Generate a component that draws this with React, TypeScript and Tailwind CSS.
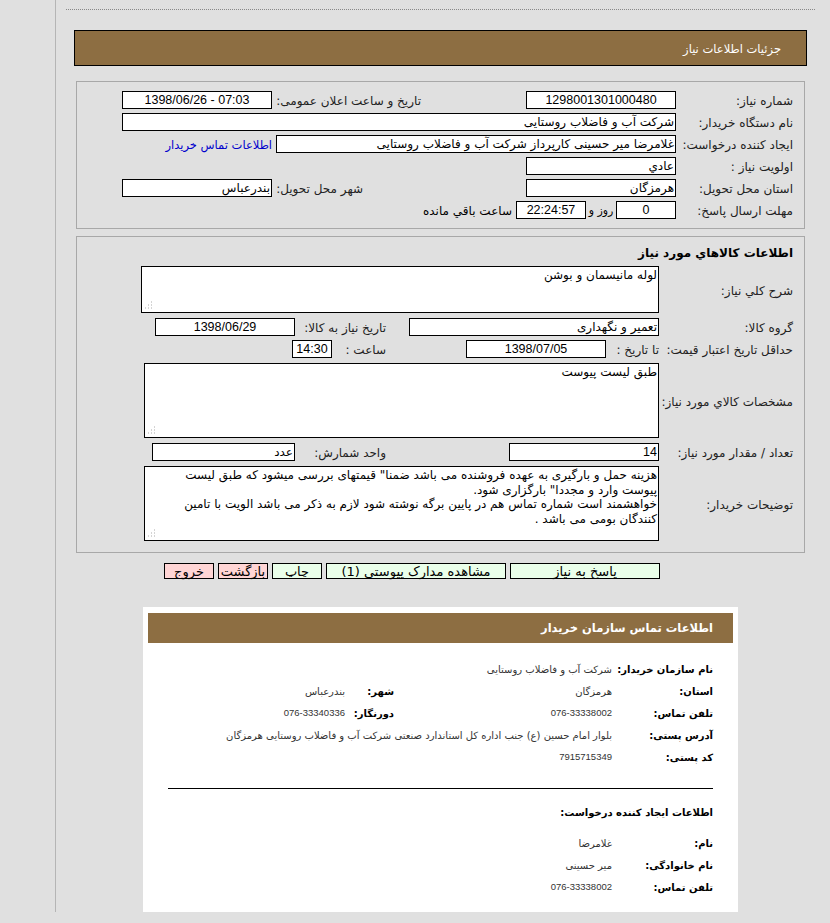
import type { ReactNode } from "react"

function Box({ w, center, num, children }: { w: string; center?: boolean; num?: boolean; children?: ReactNode }) {
  return (
    <div
      className={`${w} h-[18px] shrink-0 bg-white border border-black leading-[16px] overflow-hidden whitespace-nowrap ${center ? "text-center" : "pr-px"} ${num ? "font-['Liberation_Sans',sans-serif] text-[12.5px]" : "text-[12px]"}`}
    >
      {num ? <span dir="ltr">{children}</span> : children}
    </div>
  )
}

function Label({ w, className = "", children }: { w: string; className?: string; children: ReactNode }) {
  return <div className={`${w} shrink-0 pt-0.5 text-[12px] leading-[16px] text-[#222] whitespace-nowrap ${className}`}>{children}</div>
}

function Grip() {
  return (
    <svg className="absolute left-[3px] bottom-0.5" width="8" height="9" viewBox="0 0 8 9">
      <path d="M6 1h1M6 4h1M6 7h1M3 4h1M3 7h1M0 7h1" stroke="#aaa" strokeWidth="1" />
    </svg>
  )
}

function TextArea({ w, h, className = "", children }: { w: string; h: string; className?: string; children: ReactNode }) {
  return (
    <div className={`relative ${w} ${h} shrink-0 bg-white border border-black text-[12px] leading-[14.5px] pr-px pt-px ${className}`}>
      {children}
      <Grip />
    </div>
  )
}

function Btn({ tone, w, children }: { tone: "green" | "red"; w: string; children: ReactNode }) {
  return (
    <div className={`${w} h-4 shrink-0 border border-black text-center text-[13px] leading-[15px] whitespace-nowrap ${tone === "green" ? "bg-[#eaffea]" : "bg-[#ffd5d5]"}`}>
      {children}
    </div>
  )
}

function Key({ w = "w-[101px]", children }: { w?: string; children: ReactNode }) {
  return <div className={`${w} shrink-0 whitespace-nowrap text-[10px] font-bold text-black`}>{children}</div>
}

function Val({ w = "", num, children }: { w?: string; num?: boolean; children: ReactNode }) {
  return (
    <div className={`${w} whitespace-nowrap text-[#333] ${num ? "font-['Liberation_Sans',sans-serif] text-[9.5px]" : "text-[10px]"}`}>
      {num ? <span dir="ltr">{children}</span> : children}
    </div>
  )
}

function InfoRow({ children }: { children: ReactNode }) {
  return <div className="flex h-[22px] items-center">{children}</div>
}

export default function App() {
  return (
    <div dir="rtl" className="h-[923px] overflow-hidden bg-[#e0e0e0] font-['DejaVu_Sans',sans-serif] text-black">
      <div className="ml-[55px] h-[912px] border-l border-[#b5b5b5]">
        <div className="ml-[10px] mr-[15px] h-[10px] border-b border-dotted border-[#888]" />

        <div className="ml-[18px] mr-[23px] mt-5 h-9 border border-black bg-[#8d6e42] pr-[25px] text-[11.5px] leading-[36px] text-white">
          جزئیات اطلاعات نیاز
        </div>

        <div className="ml-[20px] mr-[25px] mt-[15px] flex h-[148px] flex-col gap-1 border border-[#a8a8a8] pr-[11px] pt-[9px]">
          <div className="flex items-center">
            <Label w="w-[117px]">شماره نیاز:</Label>
            <Box w="w-[150px]" center num>1298001301000480</Box>
            <Label w="w-[254px]" className="pr-[105px]">تاریخ و ساعت اعلان عمومی:</Label>
            <Box w="w-[150px]" center num>1398/06/26 - 07:03</Box>
          </div>
          <div className="flex items-center">
            <Label w="w-[117px]">نام دستگاه خریدار:</Label>
            <Box w="w-[554px]">شرکت آب و فاضلاب روستایی</Box>
          </div>
          <div className="flex items-center">
            <Label w="w-[117px]">ایجاد کننده درخواست:</Label>
            <Box w="w-[400px]">غلامرضا میر حسینی کارپرداز شرکت آب و فاضلاب روستایی</Box>
            <div className="mr-1 whitespace-nowrap pt-0.5 text-[11.5px] leading-[16px] text-[#0000cc]">اطلاعات تماس خریدار</div>
          </div>
          <div className="flex items-center">
            <Label w="w-[117px]">اولویت نیاز :</Label>
            <Box w="w-[150px]">عادي</Box>
          </div>
          <div className="flex items-center">
            <Label w="w-[117px]">استان محل تحویل:</Label>
            <Box w="w-[150px]">هرمزگان</Box>
            <Label w="w-[254px]" className="pr-[163px]">شهر محل تحویل:</Label>
            <Box w="w-[150px]">بندرعباس</Box>
          </div>
          <div className="flex items-center">
            <Label w="w-[117px]">مهلت ارسال پاسخ:</Label>
            <Box w="w-[60px]" center num>0</Box>
            <div className="w-[30px] shrink-0 whitespace-nowrap pt-0.5 text-center text-[11px] leading-[16px]">روز و</div>
            <Box w="w-[70px]" center num>22:24:57</Box>
            <div className="mr-1 whitespace-nowrap pt-0.5 text-[12px] leading-[16px]">ساعت باقي مانده</div>
          </div>
        </div>

        <div className="ml-[20px] mr-[25px] mt-[7px] h-[317px] border border-[#a8a8a8] pr-[11px] pt-2">
          <div className="text-[12px] font-bold leading-[16px]">اطلاعات كالاهاي مورد نياز</div>
          <div className="mt-[5px] flex items-center">
            <Label w="w-[134px]">شرح کلي نياز:</Label>
            <TextArea w="w-[518px]" h="h-[47px]">لوله مانیسمان و بوشن</TextArea>
          </div>
          <div className="mt-[5px] flex items-center">
            <Label w="w-[134px]">گروه کالا:</Label>
            <Box w="w-[250px]">تعمیر و نگهداری</Box>
            <Label w="w-[114px]" className="pr-[23px]">تاریخ نیاز به کالا:</Label>
            <Box w="w-[140px]" center num>1398/06/29</Box>
          </div>
          <div className="mt-1 flex items-center">
            <Label w="w-[134px]">حداقل تاریخ اعتبار قیمت:</Label>
            <Label w="w-[53px]">تا تاریخ :</Label>
            <Box w="w-[140px]" center num>1398/07/05</Box>
            <Label w="w-[134px]" className="pr-[80px]">ساعت :</Label>
            <Box w="w-[40px]" center num>14:30</Box>
          </div>
          <div className="mt-[5px] flex items-center">
            <Label w="w-[134px]">مشخصات کالاي مورد نياز:</Label>
            <TextArea w="w-[515px]" h="h-[75px]">طبق لیست پیوست</TextArea>
          </div>
          <div className="mt-[5px] flex items-center">
            <Label w="w-[134px]">تعداد / مقدار مورد نیاز:</Label>
            <Box w="w-[150px]" num>14</Box>
            <Label w="w-[214px]" className="pr-[123px]">واحد شمارش:</Label>
            <Box w="w-[143px]">عدد</Box>
          </div>
          <div className="mt-[5px] flex items-center">
            <Label w="w-[134px]">توضیحات خریدار:</Label>
            <TextArea w="w-[515px]" h="h-[75px]" className="pl-[18px]">
              هزینه حمل و بارگیری به عهده فروشنده می باشد ضمنا" قیمتهای بررسی میشود که طبق لیست پیوست وارد و مجددا" بارگزاری شود.
              <br />
              خواهشمند است شماره تماس هم در پایین برگه نوشته شود لازم به ذکر می باشد الویت با تامین کنندگان بومی می باشد .
            </TextArea>
          </div>
        </div>

        <div className="mr-[170px] mt-[10px] flex gap-1">
          <Btn tone="green" w="w-[150px]">پاسخ به نیاز</Btn>
          <Btn tone="green" w="w-[180px]">مشاهده مدارک پیوستي (1)</Btn>
          <Btn tone="green" w="w-[50px]">چاپ</Btn>
          <Btn tone="red" w="w-[50px]">بازگشت</Btn>
          <Btn tone="red" w="w-[50px]">خروج</Btn>
        </div>

        <div className="mr-[92px] mt-[28px] h-[305px] w-[595px] bg-white px-[5px] pt-[6px]">
          <div className="h-[30px] bg-[#8d6e42] pr-5 text-[11.5px] font-bold leading-[30px] text-white">
            اطلاعات تماس سازمان خریدار
          </div>
          <div className="pr-5 pt-[15px]">
            <InfoRow><Key>نام سازمان خریدار:</Key><Val>شرکت آب و فاضلاب روستایی</Val></InfoRow>
            <InfoRow><Key>استان:</Key><Val w="w-[218px]">هرمزگان</Val><Key w="w-[49px]">شهر:</Key><Val>بندرعباس</Val></InfoRow>
            <InfoRow><Key>تلفن تماس:</Key><Val w="w-[218px]" num>076-33338002</Val><Key w="w-[49px]">دورنگار:</Key><Val num>076-33340336</Val></InfoRow>
            <InfoRow><Key>آدرس پستی:</Key><Val>بلوار امام حسین (ع) جنب اداره کل استاندارد صنعتی شرکت آب و فاضلاب روستایی هرمزگان</Val></InfoRow>
            <InfoRow><Key>کد پستی:</Key><Val num>7915715349</Val></InfoRow>
            <div className="mt-5 w-[545px] border-t border-black" />
            <div className="mt-4 h-4 text-[10px] font-bold leading-[16px]">اطلاعات ایجاد کننده درخواست:</div>
            <div className="mt-[11px]">
              <InfoRow><Key>نام:</Key><Val>غلامرضا</Val></InfoRow>
              <InfoRow><Key>نام خانوادگی:</Key><Val>میر حسینی</Val></InfoRow>
              <InfoRow><Key>تلفن تماس:</Key><Val num>076-33338002</Val></InfoRow>
            </div>
          </div>
        </div>
      </div>
    </div>
  )
}
